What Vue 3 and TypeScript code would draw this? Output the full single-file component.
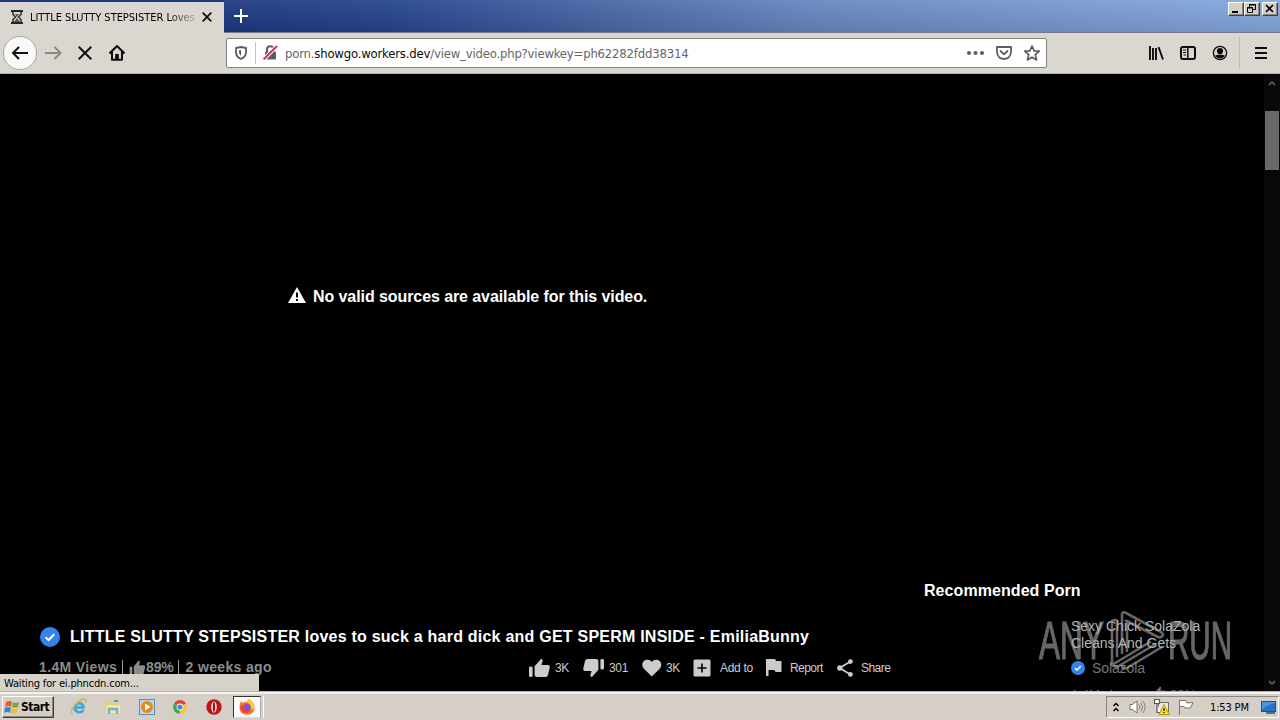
<script setup lang="ts">
interface Action { icon: string; label: string; w: number; x: number }

const icons: Record<string, string> = {
  up: 'M0 9.5Q0 8.5 1.8 8.5Q3.6 8.5 3.6 9.5V18Q3.6 19 1.8 19Q0 19 0 18ZM5.6 8.3L12 1Q14.5 1.2 13.2 4.5L12.4 7H19Q21 7 20.8 9.2L19 17Q18.5 19 16.5 19H8Q5.6 19 5.6 17Z',
  down: 'M21 10.5Q21 11.5 19.2 11.5Q17.4 11.5 17.4 10.5V2Q17.4 1 19.2 1Q21 1 21 2ZM15.4 11.7L9 19Q6.5 18.8 7.8 15.5L8.6 13H2Q0 13 .2 10.8L2 3Q2.5 1 4.5 1H13Q15.4 1 15.4 3Z',
  heart: 'M9.8 18.5L2.2 11C-2.6 6 2.5-.8 8.4 2.6L9.8 4L11.2 2.6C17-.8 22.2 6 17.4 11Z',
  add: 'M2 1.5H16Q17.5 1.5 17.5 3V17Q17.5 18.5 16 18.5H2Q.5 18.5 .5 17V3Q.5 1.5 2 1.5ZM8.2 5.5V9.2H4.5V10.8H8.2V14.5H9.8V10.8H13.5V9.2H9.8V5.5Z',
  flag: 'M0 1H9L10 3H15.5V14H9.5L8.5 12H2.5V18H0Z',
}

const actions: Action[] = [
  { icon: 'up', label: '3K', w: 21, x: 529 },
  { icon: 'down', label: '301', w: 21, x: 583 },
  { icon: 'heart', label: '3K', w: 21, x: 642 },
  { icon: 'add', label: 'Add to', w: 18, x: 693 },
  { icon: 'flag', label: 'Report', w: 16, x: 766 },
  { icon: 'share', label: 'Share', w: 16, x: 837 },
]
</script>

<template>
  <div class="screen">
    <header class="titlebar">
      <div class="tab">
        <svg class="hourglass" width="12" height="14" viewBox="0 0 12 14"><path d="M0 1H12M0 13H12" stroke="#222" stroke-width="2" /><path d="M2 2V4.5L4.5 7L2 9.5V12M10 2V4.5L7.5 7L10 9.5V12" fill="none" stroke="#333" stroke-width="1.6" /><path d="M4 4H8L6 7ZM6 8L9 12H3Z" fill="#555" /></svg>
        <span class="tab-title">LITTLE SLUTTY STEPSISTER Loves</span>
        <svg width="10" height="10" viewBox="0 0 10 10"><path d="M.7.7L9.3 9.3M9.3.7L.7 9.3" stroke="#111" stroke-width="1.8" /></svg>
      </div>
      <div class="strip">
        <svg width="14" height="14" viewBox="0 0 14 14"><path d="M7 0V14M0 7H14" stroke="#fff" stroke-width="2" /></svg>
        <div class="win-buttons">
          <span class="wb"><svg width="13" height="11"><path d="M3 9H9" stroke="#000" stroke-width="2" /></svg></span>
          <span class="wb"><svg width="13" height="11"><path d="M4.5 4V1.5H10.5V6.5H8M4 2H11M2.5 4.5H7.5V9.5H2.5ZM2 5H8" fill="none" stroke="#000" /></svg></span>
          <span class="wb close"><svg width="13" height="11"><path d="M3 2L10 9M10 2L3 9" stroke="#000" stroke-width="1.7" /></svg></span>
        </div>
      </div>
    </header>

    <nav class="toolbar">
      <span class="back"><svg width="18" height="16" viewBox="0 0 18 16"><path d="M17 8H2M8 2L2 8L8 14" fill="none" stroke="#111" stroke-width="2" /></svg></span>
      <svg class="fwd" width="17" height="14" viewBox="0 0 17 14"><path d="M0 7H15M9.5 1L15.5 7L9.5 13" fill="none" stroke="#8b8984" stroke-width="2" /></svg>
      <svg class="stop" width="14" height="14" viewBox="0 0 14 14"><path d="M.7.7L13.3 13.3M13.3.7L.7 13.3" stroke="#111" stroke-width="2" /></svg>
      <svg class="home" width="16" height="16" viewBox="0 0 16 16"><path d="M.5 8.5L8 1L15.5 8.5M3 7V14.8H13V7" fill="none" stroke="#0c0c0d" stroke-width="2" stroke-linejoin="round" /><path d="M6.2 14V9H9.8V14Z" fill="#0c0c0d" /></svg>
      <div class="urlbar">
        <svg width="12" height="14" viewBox="0 0 12 14"><path d="M6 1L11 2V6Q11 11 6 13Q1 11 1 6V2Z" fill="none" stroke="#5d5d5f" stroke-width="1.8" stroke-linejoin="round" /><path d="M6 4V10Q4 8.5 4 6V4.3Z" fill="#5d5d5f" /></svg>
        <i class="url-sep"></i>
        <svg width="15" height="16" viewBox="0 0 15 16"><path d="M4 7V4.5Q4 1.3 7.3 1.3Q10.5 1.3 10.5 4.5V7" fill="none" stroke="#5d5d5f" stroke-width="2" /><rect x="2" y="6.5" width="11" height="8" rx="1" fill="#5d5d5f" /><path d="M.8 14.2L14 1" stroke="#fff" stroke-width="4" /><path d="M.6 14.4L14 1" stroke="#e22850" stroke-width="2" /></svg>
        <span class="url">porn.<b>showgo.workers.dev</b>/view_video.php?viewkey=ph62282fdd38314</span>
        <svg class="dots" width="17" height="4"><circle cx="2" cy="2" r="2" /><circle cx="8.5" cy="2" r="2" /><circle cx="15" cy="2" r="2" /></svg>
        <svg class="pocket" width="16" height="14" viewBox="0 0 16 14"><path d="M1 1H15V6Q14.5 12.5 8 13Q1.5 12.5 1 6ZM4.5 5L8 8.3L11.5 5" fill="none" stroke="#5d5d5f" stroke-width="1.8" stroke-linejoin="round" stroke-linecap="round" /></svg>
        <svg width="16" height="16" viewBox="0 0 16 16"><path d="M8 1L10.1 5.8L15.2 6.2L11.3 9.7L12.6 14.9L8 12.2L3.4 14.9L4.7 9.7L.8 6.2L5.9 5.8Z" fill="none" stroke="#5d5d5f" stroke-width="1.7" stroke-linejoin="round" /></svg>
      </div>
      <div class="tools">
        <svg width="16" height="14" viewBox="0 0 16 14"><path d="M2 0V14M5 2V14M8 2V14M10.5 1L15 13.5" stroke="#0c0c0d" stroke-width="1.9" /></svg>
        <svg width="16" height="14" viewBox="0 0 16 14"><rect x="1" y="1" width="14" height="12" rx="2" fill="none" stroke="#0c0c0d" stroke-width="2" /><path d="M7.8 1V13" stroke="#0c0c0d" stroke-width="1.5" /><path d="M3 4H6M3 6.5H6M3.5 9H6" stroke="#0c0c0d" /></svg>
        <svg width="16" height="16" viewBox="0 0 16 16"><circle cx="8" cy="8" r="6.6" fill="none" stroke="#0c0c0d" stroke-width="1.3" /><circle cx="8" cy="6" r="3.1" fill="#0c0c0d" /><path d="M3.2 10.5Q8 8.5 12.8 10.5Q11.5 13.3 8 13.4Q4.5 13.3 3.2 10.5Z" fill="#0c0c0d" /></svg>
        <i class="tool-sep"></i>
        <svg width="12" height="12" viewBox="0 0 12 12"><path d="M0 1H12M0 6H12M0 11H12" stroke="#0c0c0d" stroke-width="2" /></svg>
      </div>
    </nav>

    <div class="viewport">
      <main class="page">
        <section class="video-col">
          <div class="player">
            <svg width="18" height="16" viewBox="0 0 18 16"><path d="M9 0L18 16H0Z" fill="#fff" /><path d="M9 5.5V10.5M9 12V14" stroke="#000" stroke-width="2" /></svg>
            <span>No valid sources are available for this video.</span>
          </div>
          <h1 class="video-title">
            <svg width="20" height="20" viewBox="0 0 20 20"><circle cx="10" cy="10" r="10" fill="#3483ed" /><path d="M5.5 10.2L8.6 13L14.2 7.3" fill="none" stroke="#fff" stroke-width="2" /></svg>
            <span>LITTLE SLUTTY STEPSISTER loves to suck a hard dick and GET SPERM INSIDE - EmiliaBunny</span>
          </h1>
          <div class="info">
            <div class="stats">
              <span class="views">1.4M Views</span><i></i>
              <svg width="17" height="15" viewBox="0 0 21 20"><path :d="icons.up" /></svg><span class="pct">89%</span><i></i><span class="age">2 weeks ago</span>
            </div>
            <div class="actions">
              <div v-for="a in actions" :key="a.x" class="action" :class="'a-' + a.icon">
                <svg :width="a.w" height="20" :viewBox="`0 0 ${a.w} 20`">
                  <g v-if="a.icon === 'share'"><path d="M13.5 3.5L2.5 10L13.5 16.5" fill="none" stroke="#ccc" stroke-width="1.8" /><circle cx="13.4" cy="3.6" r="2.4" /><circle cx="2.8" cy="10" r="2.7" /><circle cx="13.4" cy="16.4" r="2.4" /></g>
                  <path v-else :d="icons[a.icon]" fill-rule="evenodd" />
                </svg>
                <span>{{ a.label }}</span>
              </div>
            </div>
          </div>
        </section>
        <aside class="side">
          <h2>Recommended Porn</h2>
          <div class="card">
            <p>Sexy Chick SolaZola<br>Cleans And Gets</p>
            <div class="author"><svg width="14" height="14" viewBox="0 0 20 20"><circle cx="10" cy="10" r="10" fill="#3483ed" /><path d="M5.5 10.2L8.6 13L14.2 7.3" fill="none" stroke="#fff" stroke-width="2" /></svg><span>Solazola</span></div>
            <div class="card-stats"><span>1.4M views</span><svg width="14" height="13" viewBox="0 0 21 20"><path :d="icons.up" /></svg><span>83%</span></div>
          </div>
        </aside>
      </main>
      <div class="scrollbar">
        <svg width="8" height="6"><path d="M1 5L4 2L7 5" fill="none" stroke="#555" stroke-width="1.8" /></svg>
        <div class="thumb"></div>
        <svg class="dn" width="8" height="6"><path d="M1 1L4 4L7 1" fill="none" stroke="#555" stroke-width="1.8" /></svg>
      </div>
      <div class="status">Waiting for ei.phncdn.com...</div>
      <svg class="watermark" width="194" height="64" viewBox="0 0 194 64">
        <text x="1" y="50" textLength="65" lengthAdjust="spacingAndGlyphs">ANY</text>
        <text x="130" y="50" textLength="64" lengthAdjust="spacingAndGlyphs">RUN</text>
        <path d="M79 47V13Q78 9 74 12V56L112 33M84 44V5Q85 2 88 4L123 23Q127 26 123 28Q121 29 118 27L89 12V42M74 56L79 58L116 36M84 56Q84 61 89 59L124 38" fill="none" stroke="#aaa" stroke-width="2.6" stroke-linejoin="round" stroke-linecap="round" />
      </svg>
    </div>

    <footer class="taskbar">
      <div class="start">
        <svg width="16" height="15" viewBox="0 0 16 15"><path d="M2 2Q5 0 8 2L7 7Q4 5 1 7Z" fill="#e7602b" /><path d="M9 2Q12 4 15 2L14 7Q11 8 8 7Z" fill="#75a83a" /><path d="M1 8Q4 6 7 8L6 13Q3 11 0 13Z" fill="#3a83cd" /><path d="M8 8Q11 10 14 8L13 13Q10 15 7 13Z" fill="#f1bd35" /></svg>
        <b>Start</b>
      </div>
      <div class="quick">
        <svg width="18" height="18" viewBox="0 0 18 18"><path d="M13.5 12Q11.5 15 8 14Q4 12.5 5 8.5Q6.5 4.5 10.5 5.5Q13.5 6.5 13.5 9.5H6" fill="none" stroke="#3ba5dd" stroke-width="2.6" /><path d="M2.5 16Q-.5 14 4 8Q9 2 14 1Q17.5 1 15.5 5" fill="none" stroke="#d8b64a" stroke-width="1.5" /></svg>
        <svg width="18" height="18" viewBox="0 0 18 18"><path d="M2 3H7L8 5H15V15H2Z" fill="#e9cf78" /><path d="M3 7H16V15H2Z" fill="#f7e6a4" /><path d="M5 16V11H13V16" fill="none" stroke="#72b3d8" stroke-width="2.4" /><path d="M10 3H14" stroke="#55a66a" stroke-width="2" /></svg>
        <svg width="18" height="18" viewBox="0 0 18 18"><rect x="1.5" y="1.5" width="15" height="15" fill="#b7d8ee" stroke="#5591bd" /><circle cx="9" cy="9" r="6" fill="#ed8519" /><path d="M7 5.5L12.5 9L7 12.5Z" fill="#fff" /></svg>
        <svg width="18" height="18" viewBox="0 0 18 18"><path d="M9 9L3 5.5A7 7 0 0 1 15 5.5Z" fill="#dd473b" /><path d="M9 9L15 5.5A7 7 0 0 1 8.5 16Z" fill="#f3c736" /><path d="M9 9L8.5 16A7 7 0 0 1 3 5.5Z" fill="#42a557" /><circle cx="9" cy="9" r="3.4" fill="#fff" /><circle cx="9" cy="9" r="2.6" fill="#4385dc" /></svg>
        <svg width="18" height="18" viewBox="0 0 18 18"><circle cx="9" cy="9" r="7.7" fill="#bc1717" /><ellipse cx="9" cy="9" rx="2.7" ry="5.5" fill="#fff" /><ellipse cx="9" cy="9" rx="1.3" ry="4.9" fill="#9b1717" /></svg>
      </div>
      <div class="active-app">
        <svg width="18" height="18" viewBox="0 0 18 18"><path d="M3 3L5 5Q7 3 9 4Q9 2 11 1Q17 5 16.5 10Q16 16.5 9 16.7Q2 16.5 1.5 10Q1.3 6 3 3Z" fill="#fb7131" /><path d="M11 1Q17 5 16.5 10L13 12Q14 7 9 4Q9 2 11 1Z" fill="#ffce35" /><circle cx="9" cy="9.5" r="3.7" fill="#8652c8" /><path d="M2 9Q5 6 8 8Q5 8 6 11Q9 14 13 11Q12 15 7 15Q3 13 2 9Z" fill="#f0413e" /></svg>
      </div>
      <i class="grip"></i>
      <div class="tray">
        <svg width="6" height="10"><path d="M.5 4L3 1.5L5.5 4M.5 9L3 6.5L5.5 9" fill="none" stroke="#000" stroke-width="1.4" /></svg>
        <svg class="sound" width="17" height="14" viewBox="0 0 17 14"><path d="M1 4.5H3.5L8 1V13L3.5 9.5H1Z" fill="#fff" stroke="#77736e" /><path d="M10 4.5Q12 7 10 9.5M12 2.5Q15 7 12 11.5M14 1Q18 7 14 13" fill="none" stroke="#8b8883" /></svg>
        <svg class="net" width="17" height="16" viewBox="0 0 17 16"><rect x="5.5" y="3.5" width="10" height="9" fill="#e8e7e5" stroke="#716e69" /><path d="M1.5 .5H6.5V4.5H1.5ZM4 4.5V13.5H8" fill="#fff" stroke="#5d5955" stroke-width="1.2" /><path d="M11 5.5L16.5 15.5H6Z" fill="#ffdc23" stroke="#bd9315" /><path d="M11 9V12M11 13V14.2" stroke="#222" stroke-width="1.3" /></svg>
        <svg class="flagicon" width="16" height="16" viewBox="0 0 16 16"><path d="M1.5 16V1M2 1.5H8L9 4L15 3.5L12.5 9H7L6 7.5H2" fill="#fff" stroke="#77736e" /></svg>
        <span class="clock">1:53 PM</span>
        <svg class="desk" width="15" height="13" viewBox="0 0 15 13"><rect x=".5" y=".5" width="14" height="10" fill="#2874c3" stroke="#284e82" /><path d="M1 9Q5 4 14 2V1H1Z" fill="#4796df" /><path d="M5 12H14" stroke="#4d718b" stroke-width="2" /></svg>
      </div>
    </footer>
  </div>
</template>

<style>
body { margin: 0; overflow: hidden; background: #000; }
</style>

<style scoped>
* { box-sizing: border-box; }
svg { display: block; flex: none; }
h1, h2, p { margin: 0; }
.screen { width: 1280px; height: 720px; display: flex; flex-direction: column; overflow: hidden; background: #000; font-family: "DejaVu Sans Condensed", "DejaVu Sans", sans-serif; font-stretch: condensed; font-size: 11px; color: #000; }
.titlebar { height: 33px; flex: none; display: flex; background: #dad6d0; }
.tab { width: 224px; border-top: 2px solid #1b3880; display: flex; align-items: center; padding: 0 0 1px 11px; }
.tab-title { width: 165px; margin: 0 7px 0 7px; overflow: hidden; white-space: nowrap; letter-spacing: -.03px; -webkit-mask-image: linear-gradient(90deg, #000 83%, #0003); mask-image: linear-gradient(90deg, #000 83%, #0003); }
.strip { flex: 1; display: flex; justify-content: space-between; align-items: center; padding: 0 2px 1px 10px; border-bottom: 1px solid #77798a; background: linear-gradient(180deg, #ffffff12, #00000018), linear-gradient(100deg, #1c387f 0%, #24448e 16%, #4666a5 36%, #6586c0 55%, #7999d0 80%, #83a9dd 100%); }
.win-buttons { display: flex; align-self: flex-start; padding-top: 2px; }
.wb { width: 16px; height: 14px; background: #d5d0c7; border: 1px solid; border-color: #fff #404040 #404040 #fff; box-shadow: inset -1px -1px #8b8780; }
.close { margin-left: 2px; }
.toolbar { height: 41px; flex: none; display: flex; align-items: center; background: #dad6d0; border-bottom: 1px solid #b8b4ad; padding-left: 3px; }
.back { width: 34px; height: 34px; border-radius: 50%; border: 1px solid #aaa79f; background: #f9f9f8; display: grid; place-items: center; }
.fwd { margin-left: 8px; }
.stop { margin-left: 16px; }
.home { margin-left: 17px; }
.urlbar { width: 821px; height: 30px; margin-left: 101px; background: #fff; border: 1px solid #85827d; border-radius: 2px; display: flex; align-items: center; padding: 0 6px 0 8px; }
.url-sep { width: 1px; height: 22px; background: #c7c5c2; margin: 0 7px 0 8px; }
.url { flex: 1; margin-left: 7px; font-size: 13px; letter-spacing: -.2px; color: #666; white-space: nowrap; }
.url b { font-weight: 400; color: #0c0c0d; }
.dots { fill: #5d5d5f; }
.pocket { margin: 0 12px; }
.tools { flex: 1; display: flex; align-items: center; gap: 16px; padding-left: 101px; }
.tool-sep { width: 1px; height: 32px; background: #c2beb7; margin: 0 -1px 0 -5px; }
.viewport { position: relative; height: 618px; flex: none; display: flex; background: #000; overflow: hidden; border-bottom: 1px solid #b8b4ad; }
.page { flex: 1; display: flex; font-family: "Liberation Sans", Arial, sans-serif; font-stretch: normal; }
.video-col { width: 924px; display: flex; flex-direction: column; }
.player { height: 550px; padding: 213px 0 0 288px; display: flex; align-items: flex-start; gap: 7px; color: #fff; font-size: 16px; font-weight: 700; line-height: 19px; letter-spacing: -.08px; white-space: nowrap; }
.video-title { height: 26px; padding-left: 40px; display: flex; align-items: center; gap: 10px; color: #fff; font-size: 16px; line-height: 24px; letter-spacing: .228px; white-space: nowrap; }
.info { height: 34px; display: flex; align-items: center; }
.stats { width: 529px; padding-left: 39px; display: flex; align-items: center; font-size: 14px; font-weight: 700; color: #8c8c8c; letter-spacing: .36px; white-space: nowrap; }
.stats svg { fill: #8c8c8c; }
.stats i { width: 1px; height: 15px; background: #999; margin: 0 6px 0 5px; }
.pct { letter-spacing: -.2px; }
.actions { display: flex; align-items: center; color: #ccc; font-size: 12px; padding-top: 2px; }
.action { display: flex; align-items: center; gap: 5px; width: 54px; white-space: nowrap; letter-spacing: -.3px; }
.action svg { fill: #ccc; }
.a-down { width: 59px; }
.a-heart { width: 51px; gap: 3px; }
.a-add { width: 73px; gap: 9px; }
.a-flag { width: 71px; gap: 8px; letter-spacing: -.55px; }
.a-flag span { letter-spacing: -.55px; }
.a-share { gap: 8px; letter-spacing: -.55px; }
.side { padding-top: 507px; white-space: nowrap; }
.side h2 { color: #fff; font-size: 16px; line-height: 20px; letter-spacing: .07px; }
.card { padding: 17px 0 0 147px; color: #b6b6b6; }
.card p { font-size: 14px; line-height: 17px; }
.author { display: flex; align-items: center; gap: 7px; margin-top: 7px; height: 18px; font-size: 14px; color: #777; letter-spacing: -.1px; }
.card-stats { display: flex; gap: 4px; margin-top: 9px; font-size: 13px; line-height: 17px; color: #777; }
.card-stats span:first-child { width: 77px; }
.card-stats svg { fill: #777; }
.scrollbar { width: 16px; display: flex; flex-direction: column; align-items: center; background: #090909; padding: 6px 0 5px; }
.thumb { width: 14px; height: 59px; margin-top: 25px; background: #696969; }
.dn { margin-top: auto; }
.status { position: absolute; left: 0; bottom: -1px; width: 259px; height: 18px; padding-left: 4px; line-height: 20px; background: #d7d2ca; letter-spacing: -.17px; }
.watermark { position: absolute; left: 1038px; top: 535px; opacity: .6; pointer-events: none; }
.watermark text { font: 54px "Liberation Sans", Arial, sans-serif; fill: #aaa; stroke: #aaa; stroke-width: 1.2px; }
.taskbar { flex: 1; display: flex; align-items: center; background: #d6cfc7; border-top: 2px solid #f5f3f0; padding: 0 1px 0 2px; }
.start { width: 52px; height: 22px; display: flex; align-items: center; gap: 1px; padding-left: 1px; border: 1px solid; border-color: #fff #404040 #404040 #fff; box-shadow: inset -1px -1px #8a867f; font-size: 12px; letter-spacing: -.5px; }
.quick { display: flex; gap: 15.8px; margin-left: 16px; }
.active-app { width: 28px; height: 22px; margin-left: 10px; display: grid; place-items: center; background: #fafafa; border: 1px solid; border-color: #333 #aaa #ddd #333; }
.grip { width: 3px; height: 22px; border-right: 1px solid #fff; }
.tray { width: 173px; height: 22px; margin-left: auto; display: flex; align-items: center; border: 1px solid; border-color: #89857e #fff #fff #89857e; padding-left: 6px; }
.sound { margin-left: 10px; }
.net { margin-left: 7px; }
.flagicon { margin-left: 8px; }
.clock { width: 42px; margin-left: 16px; white-space: nowrap; letter-spacing: -.15px; }
.desk { margin-left: 9px; }
</style>
